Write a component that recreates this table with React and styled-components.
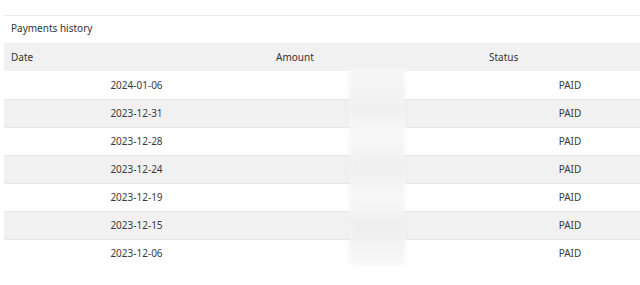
import React from "react";
import styled, { createGlobalStyle } from "styled-components";

const GlobalStyle = createGlobalStyle`
  html, body {
    margin: 0;
    padding: 0;
    background: #fff;
    overflow: hidden;
  }
  body {
    font-family: "Noto Sans", "Open Sans", sans-serif;
    color: #3a3a3a;
  }
`;

const Panel = styled.section`
  position: relative;
  margin: 15px 0 0 4px;
  width: 654px;
  border-top: 1px solid #ececec;
`;

const Title = styled.div`
  height: 27px;
  box-sizing: border-box;
  display: flex;
  align-items: center;
  padding: 0 0 3px 7px;
  font-size: 10px;
  color: #333;
`;

const Table = styled.table`
  width: 100%;
  border-collapse: collapse;
  table-layout: fixed;
  font-size: 10px;
`;

const HeadRow = styled.tr`
  background: #f1f1f1;
  height: 28px;
`;

const Th = styled.th`
  box-sizing: border-box;
  font-weight: 400;
  text-align: left;
  padding: 0 7px;
  width: ${(p) => (p.$w ? `${p.$w}px` : "auto")};
  color: #333;
`;

const Row = styled.tr`
  height: 28px;
  background: ${(p) => (p.$alt ? "#f1f1f1" : "#fff")};
  border-bottom: 1px solid #e6e6ea;

  &:last-child {
    border-bottom: none;
  }
`;

const Td = styled.td`
  text-align: center;
  padding: 0;
  color: #3a3a3a;
`;

const Redacted = styled.div`
  position: absolute;
  left: 345px;
  top: 52px;
  width: 56px;
  height: 198px;
  background: linear-gradient(
    to bottom,
    #f7f7f7 0%,
    #f0f0f0 20%,
    #f8f8f8 35%,
    #efefef 50%,
    #f8f8f8 65%,
    #eeeeee 80%,
    #f9f9f9 100%
  );
  filter: blur(2px);
`;

const payments = [
  "2024-01-06",
  "2023-12-31",
  "2023-12-28",
  "2023-12-24",
  "2023-12-19",
  "2023-12-15",
  "2023-12-06",
];

export default function App() {
  return (
    <>
      <GlobalStyle />
      <Panel>
        <Title>Payments history</Title>
        <Table>
          <thead>
            <HeadRow>
              <Th $w={265}>Date</Th>
              <Th $w={213}>Amount</Th>
              <Th>Status</Th>
            </HeadRow>
          </thead>
          <tbody>
            {payments.map((d, i) => (
              <Row key={d} $alt={i % 2 === 1}>
                <Td>{d}</Td>
                <Td></Td>
                <Td>PAID</Td>
              </Row>
            ))}
          </tbody>
        </Table>
        <Redacted />
      </Panel>
    </>
  );
}
